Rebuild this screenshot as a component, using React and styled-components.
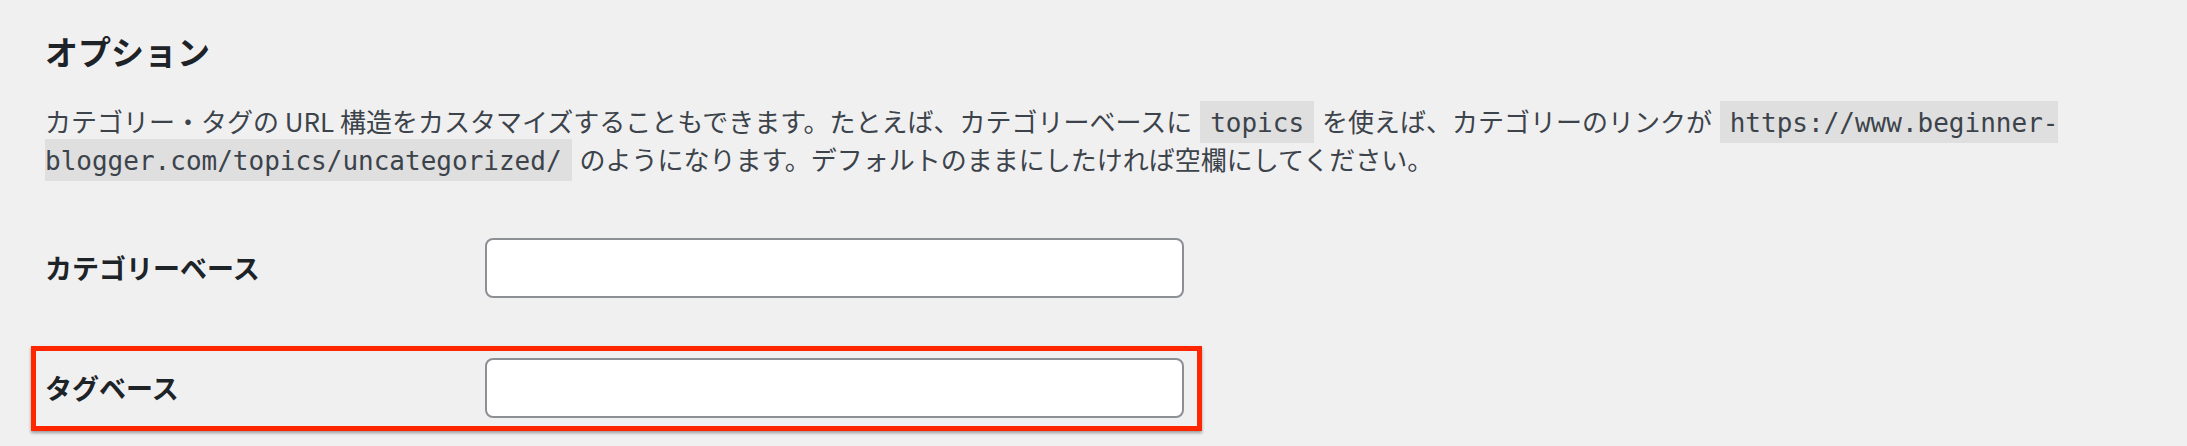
import React from "react";
import styled, { createGlobalStyle } from "styled-components";

const GlobalStyle = createGlobalStyle`
  html, body {
    margin: 0;
    padding: 0;
    background: #f0f0f1;
  }
  body {
    font-family: "Noto Sans CJK JP", "Noto Sans", sans-serif;
    color: #3c434a;
  }
`;

const Page = styled.div`
  padding: 28px 40px 0 45px;
  box-sizing: border-box;
  width: 2187px;
  height: 446px;
  overflow: hidden;
`;

const Title = styled.h2`
  margin: 0 0 28px;
  font-size: 33px;
  line-height: 46px;
  font-weight: 700;
  color: #1d2327;
`;

const Description = styled.p`
  margin: 0 0 30px;
  font-size: 26px;
  line-height: 38px;
  color: #3c434a;
`;

const Code = styled.code`
  font-family: "DejaVu Sans Mono", "Liberation Mono", monospace;
  font-size: 26px;
  line-height: 1;
  padding: 7px 10px 5px;
  margin: 0 2px;
  background: rgba(0, 0, 0, 0.07);
  color: #3c434a;
`;

const Form = styled.div`
  display: flex;
  flex-direction: column;
`;

const Row = styled.div`
  position: relative;
  display: grid;
  grid-template-columns: 440px 699px;
  align-items: center;
  padding: 30px 0;
`;

const Label = styled.label`
  font-size: 27px;
  font-weight: 700;
  color: #1d2327;
  line-height: 36px;
`;

const TextInput = styled.input`
  box-sizing: border-box;
  width: 699px;
  height: 60px;
  margin: 0;
  padding: 0 16px;
  border: 2px solid #8c8f94;
  border-radius: 8px;
  background: #fff;
  font-family: inherit;
  font-size: 26px;
  color: #2c3338;
  outline: none;
`;

const Highlight = styled.div`
  position: absolute;
  top: 18px;
  left: -14px;
  width: 1171px;
  height: 85px;
  box-sizing: border-box;
  border: 5px solid #ff2600;
  box-shadow: 0 2px 3px rgba(0, 0, 0, 0.35);
  pointer-events: none;
`;

export default function App() {
  return (
    <>
      <GlobalStyle />
      <Page>
        <Title>オプション</Title>
        <Description>
          カテゴリー・タグの URL 構造をカスタマイズすることもできます。たとえば、カテゴリーベースに{" "}
          <Code>topics</Code> を使えば、カテゴリーのリンクが{" "}
          <Code>https://www.beginner-blogger.com/topics/uncategorized/</Code>{" "}
          のようになります。デフォルトのままにしたければ空欄にしてください。
        </Description>
        <Form>
          <Row>
            <Label htmlFor="category_base">カテゴリーベース</Label>
            <TextInput id="category_base" type="text" />
          </Row>
          <Row>
            <Label htmlFor="tag_base">タグベース</Label>
            <TextInput id="tag_base" type="text" />
            <Highlight />
          </Row>
        </Form>
      </Page>
    </>
  );
}
